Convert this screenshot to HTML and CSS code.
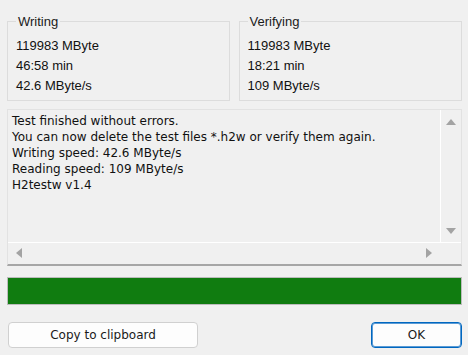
FILE: index.html
```html
<!DOCTYPE html>
<html lang="en">
<head>
    <meta charset="UTF-8">
    <title>H2testw</title>
    <link rel="stylesheet" href="styles.css">
</head>
<body>

<div class="dialog">
    <div class="groups">
        <fieldset class="group">
            <legend>Writing</legend>
            <div class="line">119983 MByte</div>
            <div class="line">46:58 min</div>
            <div class="line">42.6 MByte/s</div>
        </fieldset>
        <fieldset class="group">
            <legend>Verifying</legend>
            <div class="line">119983 MByte</div>
            <div class="line">18:21 min</div>
            <div class="line">109 MByte/s</div>
        </fieldset>
    </div>

    <div class="memo">
        <div class="memo-body">
            <div class="memo-text">
                Test finished without errors.<br>
                You can now delete the test files *.h2w or verify them again.<br>
                Writing speed: 42.6 MByte/s<br>
                Reading speed: 109 MByte/s<br>
                H2testw v1.4
            </div>
            <div class="vscroll">
                <span class="arrow arrow-up"></span>
                <span class="arrow arrow-down"></span>
            </div>
        </div>
        <div class="hscroll">
            <span class="arrow arrow-left"></span>
            <span class="arrow arrow-right"></span>
        </div>
    </div>

    <div class="progress"><div class="progress-fill" style="width: 100%;"></div></div>

    <div class="buttons">
        <button class="btn btn-copy">Copy to clipboard</button>
        <button class="btn btn-ok">OK</button>
    </div>
</div>

</body>
</html>
```

FILE: styles.css
```css
body {
    margin: 0;
    background-color: #f0f0f0;
    font-family: "DejaVu Sans", sans-serif;
    color: #000;
}
.dialog {
    width: 455px;
    padding: 14px 6px 0 7px;
    display: flex;
    flex-direction: column;
}
.groups {
    display: flex;
    gap: 9px;
}
.group {
    margin: 0;
    padding: 7px 0 7px 8px;
    border: 1px solid #dcdcdc;
    width: 214px;
    height: 71px;
    font-family: "Liberation Sans", Arial, sans-serif;
    font-size: 13px;
    color: #111;
}
.group + .group {
    width: 215px;
}
.group legend {
    padding: 0 2px;
    margin-left: 0;
    font-size: 13px;
    color: #1a1a1a;
}
.group .line {
    height: 20px;
    line-height: 20px;
}
.memo {
    margin-top: 8px;
    height: 154px;
    border: 1px solid #e2e2e2;
    border-bottom: 2px solid #a6a6a6;
    display: flex;
    flex-direction: column;
}
.memo-body {
    flex: 1;
    display: flex;
    border-bottom: 1px solid #fff;
}
.memo-text {
    flex: 1;
    padding: 3px 4px;
    font-size: 12px;
    line-height: 16px;
    color: #111;
    border-right: 1px solid #fff;
}
.vscroll {
    width: 20px;
    position: relative;
}
.hscroll {
    height: 21px;
    position: relative;
}
.arrow {
    position: absolute;
    width: 0;
    height: 0;
}
.arrow-up {
    left: 5px;
    top: 9px;
    border-left: 5px solid transparent;
    border-right: 5px solid transparent;
    border-bottom: 6px solid #a3a3a3;
}
.arrow-down {
    left: 5px;
    bottom: 8px;
    border-left: 5px solid transparent;
    border-right: 5px solid transparent;
    border-top: 6px solid #a3a3a3;
}
.arrow-left {
    left: 8px;
    top: 5px;
    border-top: 5px solid transparent;
    border-bottom: 5px solid transparent;
    border-right: 6px solid #a3a3a3;
}
.arrow-right {
    right: 29px;
    top: 5px;
    border-top: 5px solid transparent;
    border-bottom: 5px solid transparent;
    border-left: 6px solid #a3a3a3;
}
.progress {
    margin-top: 11px;
    height: 26px;
    border: 1px solid #bcbcbc;
    background-color: #e6e6e6;
}
.progress-fill {
    height: 100%;
    background-color: #107c10;
}
.buttons {
    margin-top: 17px;
    display: flex;
    justify-content: space-between;
}
.btn {
    height: 26px;
    font-family: "DejaVu Sans", sans-serif;
    font-size: 12px;
    color: #1a1a1a;
    background-color: #fdfdfd;
    border: 1px solid #d0d0d0;
    border-radius: 4px;
    padding: 0;
}
.btn-copy {
    width: 190px;
    margin-left: 1px;
}
.btn-ok {
    width: 91px;
    border: 1px solid #0067c0;
    box-shadow: inset 0 0 0 1px #5b9bd5;
}
```
